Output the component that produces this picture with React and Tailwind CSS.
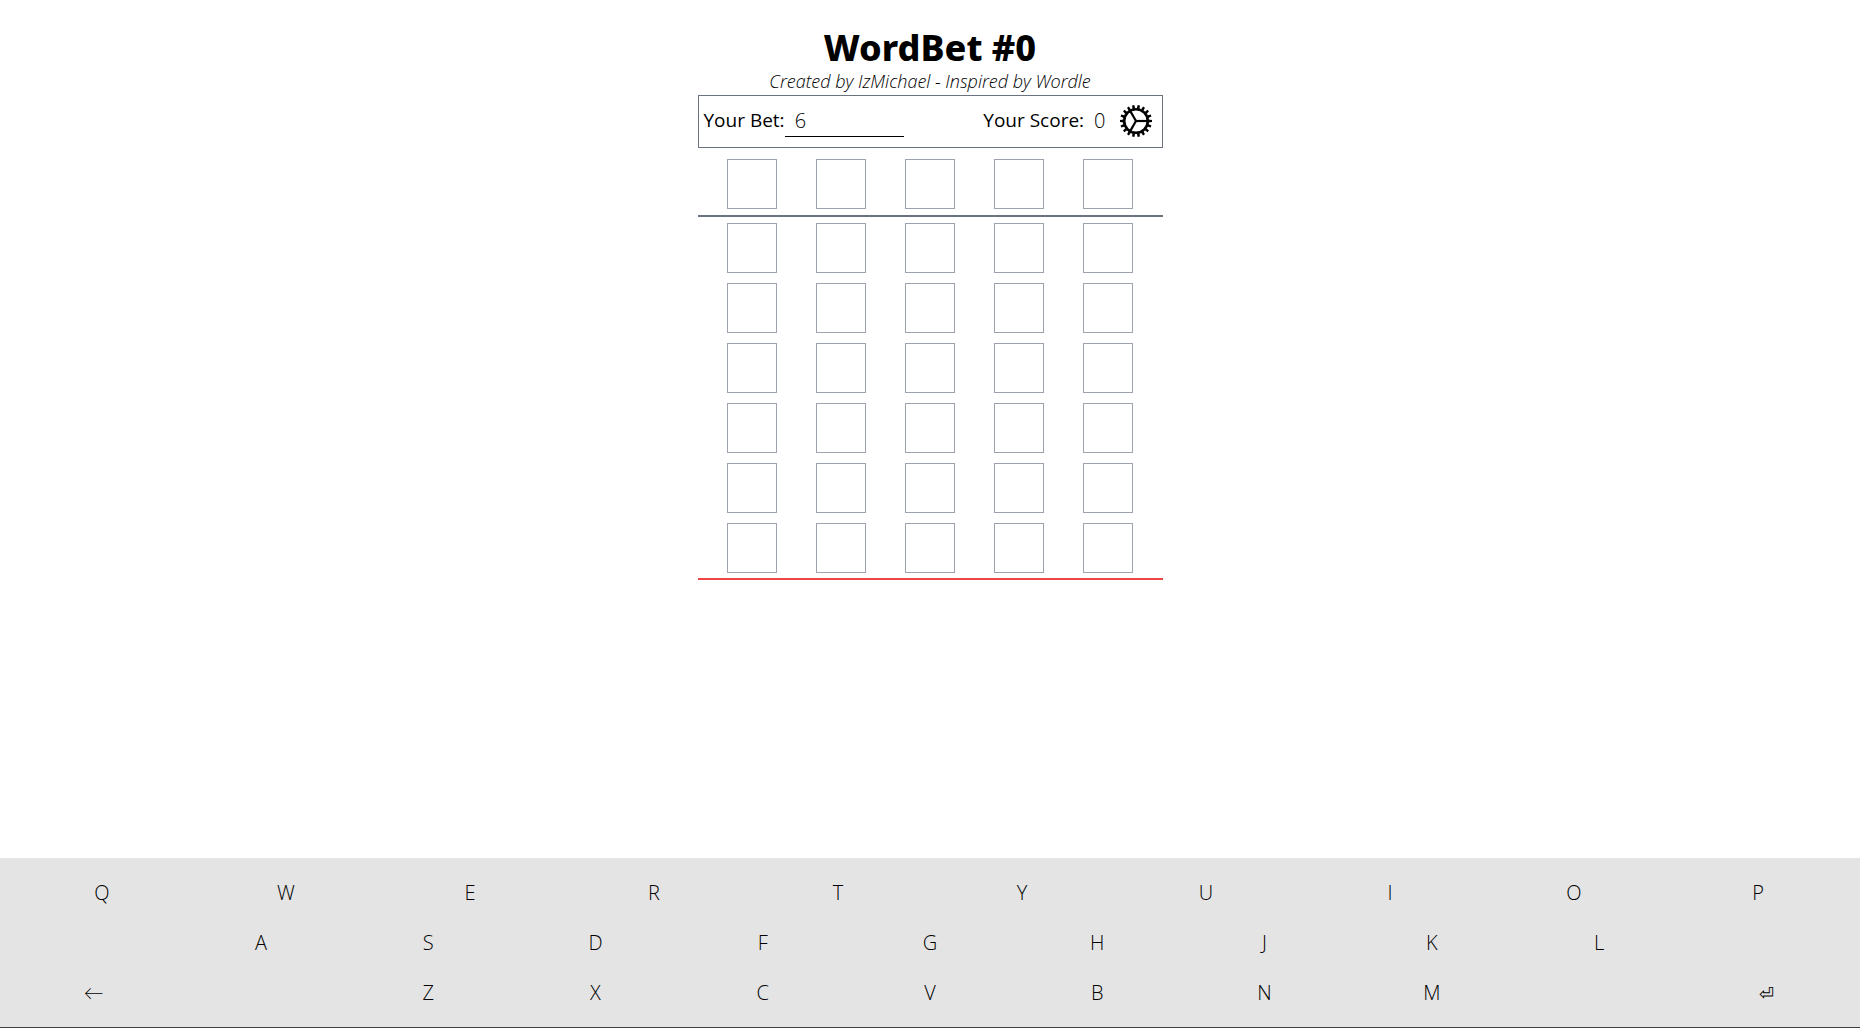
import React, { useState } from "react";

const TOP_KEYS = ["Q", "W", "E", "R", "T", "Y", "U", "I", "O", "P"];
const MIDDLE_KEYS = ["", "A", "S", "D", "F", "G", "H", "J", "K", "L", ""];
const BOTTOM_KEYS = ["←", "", "Z", "X", "C", "V", "B", "N", "M", "", "⏎"];
const LABELS = { "←": "Backspace", "⏎": "Enter" };
const TEETH = Array.from({ length: 18 }, (_, i) => i * 20);

function Gear() {
  return (
    <svg viewBox="-16 -16 32 32" className="size-8" stroke="black" fill="none" aria-hidden="true">
      <circle r="11.8" strokeWidth="2.6" />
      {TEETH.map((angle) => (
        <path key={angle} d="M12.5 -1.4 L16 -1.1 V1.1 L12.5 1.4 Z" fill="black" stroke="none" transform={`rotate(${angle})`} />
      ))}
      {[0, 120, 240].map((angle) => (
        <path key={angle} d="M0 0H12" strokeWidth="2.2" transform={`rotate(${angle})`} />
      ))}
    </svg>
  );
}

function LetterRow() {
  return (
    <div className="grid grid-cols-5 justify-items-center px-2.5">
      {[0, 1, 2, 3, 4].map((i) => (
        <div key={i} className="size-[50px] border border-[#9ca3af]" />
      ))}
    </div>
  );
}

function Key({ label }) {
  if (!label) return <span />;
  return (
    <button
      type="button"
      aria-label={LABELS[label] || label}
      className={label === "⏎" ? "h-[50px] w-full text-center text-lg" : "h-[50px] w-full text-center"}
    >
      {label}
    </button>
  );
}

export default function App() {
  const [bet, setBet] = useState("6");
  return (
    <div className="flex min-h-screen flex-col bg-white font-['Open_Sans','Lato',sans-serif] text-xl font-light text-black">
      <main className="mx-auto w-1/4 pt-7">
        <h1 className="text-center font-['Noto_Sans',sans-serif] text-4xl font-extrabold">WordBet #0</h1>
        <p className="text-center text-lg leading-[27px] italic">Created by IzMichael - Inspired by Wordle</p>
        <section className="flex h-[53px] items-center border border-[#6b7280] pr-2.5 pb-0.5 pl-[5px]">
          <label htmlFor="bet" className="text-[19px] font-normal">Your Bet:</label>
          <input
            id="bet"
            value={bet}
            onChange={(e) => setBet(e.target.value)}
            className="h-8 w-[119px] border-b border-black px-2.5 outline-none"
          />
          <span className="ml-auto text-[19px] font-normal">Your Score:</span>
          <span className="px-2.5">0</span>
          <button type="button" aria-label="Settings" className="ml-1">
            <Gear />
          </button>
        </section>
        <div className="border-b-2 border-[#6b7280] pt-[11px] pb-1.5">
          <LetterRow />
        </div>
        <div className="flex flex-col gap-2.5 border-b-2 border-[#ef4444] pt-1.5 pb-[5px]">
          {[0, 1, 2, 3, 4, 5].map((i) => (
            <LetterRow key={i} />
          ))}
        </div>
      </main>
      <footer className="mt-auto border-b border-neutral-700 bg-[#e4e4e4] px-2.5 pt-2.5 pb-[9px]">
        <div className="grid grid-cols-10">
          {TOP_KEYS.map((k) => <Key key={k} label={k} />)}
        </div>
        <div className="grid grid-cols-11">
          {MIDDLE_KEYS.map((k, i) => <Key key={i} label={k} />)}
        </div>
        <div className="grid grid-cols-11">
          {BOTTOM_KEYS.map((k, i) => <Key key={i} label={k} />)}
        </div>
      </footer>
    </div>
  );
}
